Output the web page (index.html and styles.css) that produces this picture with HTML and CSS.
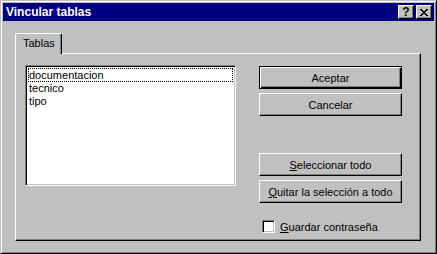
FILE: index.html
```html
<!DOCTYPE html>
<html lang="es">
<head>
    <meta charset="UTF-8">
    <title>Vincular tablas</title>
    <link rel="stylesheet" href="styles.css">
</head>
<body>
    <div class="ventana">
        <div class="barra-titulo">
            <span class="titulo">Vincular tablas</span>
            <div class="botones-titulo">
                <button class="btn-titulo ayuda">?</button>
                <button class="btn-titulo cerrar">
                    <svg width="8" height="7" viewBox="0 0 8 7">
                        <path d="M0 0h2v1h-2zM6 0h2v1h-2zM1 1h2v1h-2zM5 1h2v1h-2zM2 2h4v1h-4zM3 3h2v1h-2zM2 4h4v1h-4zM1 5h2v1h-2zM5 5h2v1h-2zM0 6h2v1h-2zM6 6h2v1h-2z" fill="#000"/>
                    </svg>
                </button>
            </div>
        </div>
        <div class="contenido">
            <div class="pestanas">
                <div class="pestana activa">Tablas</div>
            </div>
            <div class="panel">
                <div class="lista">
                    <div class="item foco">documentacion</div>
                    <div class="item">tecnico</div>
                    <div class="item">tipo</div>
                </div>
                <div class="acciones">
                    <button class="boton defecto">Aceptar</button>
                    <button class="boton">Cancelar</button>
                    <button class="boton separado"><u>S</u>eleccionar todo</button>
                    <button class="boton"><u>Q</u>uitar la selección a todo</button>
                    <label class="casilla-fila">
                        <span class="casilla"></span>
                        <span><u>G</u>uardar contraseña</span>
                    </label>
                </div>
            </div>
        </div>
    </div>
</body>
</html>
```

FILE: styles.css
```css
body {
    margin: 0;
    background: #c0c0c0;
    font-family: "Liberation Sans", Arial, sans-serif;
    font-size: 11px;
    color: #000;
}

.ventana {
    width: 437px;
    height: 254px;
    box-sizing: border-box;
    background: #c0c0c0;
    border: 1px solid;
    border-color: #c0c0c0 #000 #000 #c0c0c0;
    box-shadow: inset 1px 1px #fff, inset -1px -1px #808080;
    padding: 2px;
    display: flex;
    flex-direction: column;
}

.barra-titulo {
    height: 18px;
    background: #000080;
    display: flex;
    align-items: center;
    justify-content: space-between;
    padding: 0 2px 0 3px;
}

.titulo {
    color: #fff;
    font-weight: bold;
    font-size: 12px;
    letter-spacing: 0;
}

.botones-titulo {
    display: flex;
    gap: 2px;
}

.btn-titulo {
    width: 16px;
    height: 14px;
    padding: 0;
    margin: 0;
    background: #c0c0c0;
    border: 1px solid;
    border-color: #fff #000 #000 #fff;
    box-shadow: inset -1px -1px #808080;
    display: flex;
    align-items: center;
    justify-content: center;
    font-family: "Liberation Sans", Arial, sans-serif;
    font-weight: bold;
    font-size: 12px;
    line-height: 1;
    color: #000;
}

.contenido {
    flex: 1;
    display: flex;
    flex-direction: column;
    padding: 12px 13px 10px 12px;
}

.pestanas {
    display: flex;
    height: 20px;
    position: relative;
    z-index: 1;
}

.pestana {
    width: 47px;
    box-sizing: border-box;
    height: 21px;
    background: #c0c0c0;
    border: 1px solid;
    border-color: #fff #000 transparent #fff;
    border-bottom: none;
    border-radius: 2px 2px 0 0;
    box-shadow: inset -1px 0 #808080;
    padding: 3px 0 0 7px;
    line-height: 13px;
}

.panel {
    flex: 1;
    display: flex;
    align-items: flex-start;
    border: 1px solid;
    border-color: #fff #000 #000 #fff;
    box-shadow: inset -1px -1px #808080;
    padding: 11px 0 0 9px;
}

.lista {
    width: 211px;
    height: 121px;
    box-sizing: border-box;
    background: #fff;
    border: 1px solid;
    border-color: #808080 #fff #fff #808080;
    box-shadow: inset 1px 1px #000, inset -1px -1px #c0c0c0;
    padding: 2px;
}

.item {
    line-height: 13px;
    padding-left: 1px;
    white-space: nowrap;
}

.item.foco {
    line-height: 12px;
    padding-left: 0;
    border: 1px dotted #000;
}

.acciones {
    margin-left: 23px;
    width: 143px;
    margin-top: 1px;
    display: flex;
    flex-direction: column;
}

.boton {
    height: 23px;
    width: 143px;
    margin: 0 0 4px 0;
    padding: 0;
    background: #c0c0c0;
    border: 1px solid;
    border-color: #fff #000 #000 #fff;
    box-shadow: inset -1px -1px #808080;
    font-family: "Liberation Sans", Arial, sans-serif;
    font-size: 11px;
    color: #000;
}

.boton.defecto {
    border: 1px solid #000;
    box-shadow: inset 1px 1px #fff, inset -1px -1px #000, inset -2px -2px #808080;
}

.boton.separado {
    margin-top: 33px;
}

.casilla-fila {
    display: flex;
    align-items: center;
    gap: 5px;
    margin: 13px 0 0 3px;
}

.casilla {
    width: 13px;
    height: 13px;
    box-sizing: border-box;
    background: #fff;
    border: 1px solid;
    border-color: #808080 #fff #fff #808080;
    box-shadow: inset 1px 1px #000, inset -1px -1px #c0c0c0;
}
```
